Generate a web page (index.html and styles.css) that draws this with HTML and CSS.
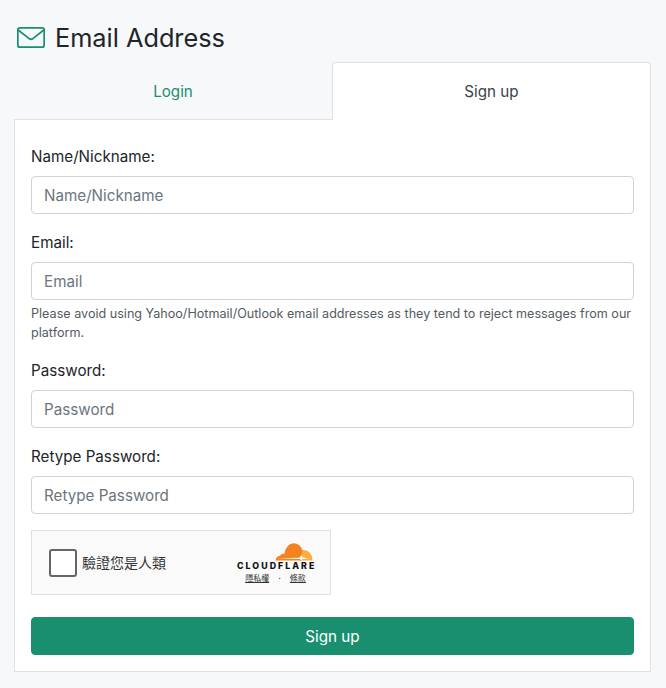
FILE: index.html
```html
<!DOCTYPE html>
<html lang="en">
<head>
<meta charset="utf-8">
<title>Email Address</title>
<link rel="stylesheet" href="styles.css">
</head>
<body>
<main class="page">
  <h1 class="title">
    <svg class="title-icon" viewBox="0 0 28 21" width="28" height="21" fill="none" stroke="#198f70" stroke-width="1.7" aria-hidden="true">
      <rect x="0.85" y="0.85" width="26.3" height="19.3" rx="2"/>
      <path d="M1.2 3 L12.4 11.8 Q14 13 15.6 11.8 L26.8 3"/>
    </svg>
    <span class="title-text">Email Address</span>
  </h1>
  <nav class="tabs">
    <a class="tab tab-login" href="#">Login</a>
    <a class="tab tab-active" href="#">Sign up</a>
  </nav>
  <form class="card">
    <div class="field">
      <label class="label">Name/Nickname:</label>
      <input class="input" placeholder="Name/Nickname">
    </div>
    <div class="field">
      <label class="label">Email:</label>
      <input class="input" placeholder="Email">
      <p class="help">Please avoid using Yahoo/Hotmail/Outlook email addresses as they tend to reject messages from our platform.</p>
    </div>
    <div class="field">
      <label class="label">Password:</label>
      <input class="input" placeholder="Password">
    </div>
    <div class="field">
      <label class="label">Retype Password:</label>
      <input class="input" placeholder="Retype Password">
    </div>
    <div class="turnstile">
      <span class="check"></span>
      <span class="verify">驗證您是人類</span>
      <div class="cf">
        <svg class="cf-cloud" viewBox="0 0 38 18" width="38" height="18" aria-hidden="true">
          <path fill="#fbad41" d="M25 17.6 L37.6 17.6 Q37.2 8 29 7 L26 7 Z"/>
          <path fill="#f6821f" d="M0.6 17.6 Q1 13.2 5 12.8 Q6.6 10.2 9.4 11 Q11 1 18.5 0.3 Q25 0.5 27.4 7 L26.4 13 L26.4 17.6 Z"/>
          <path fill="#fff" d="M2 15.2 L24.4 14.8 L26.6 12 L27.4 14.6 L34 15.3 L27.4 15.9 L26.6 17.2 L24.6 15.9 Z"/>
        </svg>
        <div class="cf-word">CLOUDFLARE</div>
        <div class="cf-links"><u>隱私權</u><span class="cf-dot">·</span><u>條款</u></div>
      </div>
    </div>
    <button class="submit" type="button">Sign up</button>
  </form>
</main>
</body>
</html>
```
FILE: styles.css
```css
* { box-sizing: border-box; }
html, body { margin: 0; padding: 0; }
body {
  background: #f7f8fa;
  color: #212529;
  font-family: Inter, "Noto Sans CJK TC", sans-serif;
  font-size: 16px;
  line-height: 24px;
}
.page {
  width: 666px;
  height: 688px;
  padding: 19px 15px 16px 14px;
}
.title {
  display: flex;
  align-items: center;
  gap: 10px;
  margin: 0 0 7px 3px;
  height: 36px;
  font-size: 25.3px;
  font-weight: 400;
  line-height: 36px;
}
.title-text { padding-top: 1px; }
.tabs { display: flex; height: 58px; position: relative; z-index: 1; }
.tab {
  flex: 1;
  display: flex;
  align-items: center;
  justify-content: center;
  padding-top: 1px;
  color: #198f70;
  font-size: 15.2px;
  text-decoration: none;
  border: 1px solid transparent;
  border-radius: 4px 4px 0 0;
}
.tab-login { flex: 0 0 318px; }
.tab-active {
  background: #fff;
  color: #3c4248;
  border-color: #dee2e6 #dee2e6 #fff;
}
.card {
  margin-top: -1px;
  height: 553px;
  padding: 24px 16px 16px;
  background: #fff;
  border: 1px solid #dee2e6;
}
.field { margin-bottom: 16px; }
.label { display: block; padding-top: 1px; margin-bottom: 7px; font-size: 15.2px; }
.input {
  display: block;
  width: 100%;
  height: 38px;
  padding: 0 12px;
  font: inherit;
  font-size: 15.2px;
  border: 1px solid #ced4da;
  border-radius: 4px;
  background: #fff;
}
.input::placeholder { color: #6c757d; opacity: 1; }
.help {
  margin: 4px 0 0;
  font-size: 12.6px;
  line-height: 19px;
  color: #545b62;
}
.turnstile {
  display: flex;
  align-items: center;
  width: 300px;
  height: 65px;
  margin-bottom: 22px;
  padding: 0 16px 0 17px;
  background: #fafafa;
  border: 1px solid #e0e0e0;
}
.check {
  width: 28px;
  height: 28px;
  background: #fff;
  border: 2px solid #666;
  border-radius: 3px;
}
.verify { margin-left: 5px; font-size: 14px; color: #333; flex: 1; }
.cf { display: flex; flex-direction: column; align-items: center; width: 78px; padding-top: 1px; }
.cf-cloud { align-self: flex-end; margin-right: 1px; }
.cf-word { width: 78px; padding-left: 1px; font-size: 8.8px; font-weight: 800; letter-spacing: 2.05px; line-height: 9px; color: #111; white-space: nowrap; }
.cf-links { display: flex; justify-content: center; gap: 9px; margin-top: 2px; padding-left: 1px; font-size: 8px; line-height: 12px; color: #333; }
.cf-dot { font-weight: 700; }
.submit {
  display: block;
  width: 100%;
  height: 38px;
  padding: 1px 0 0;
  background: #198f70;
  color: #fff;
  font: inherit;
  font-size: 15.2px;
  border: 1px solid #198f70;
  border-radius: 4px;
}
```
